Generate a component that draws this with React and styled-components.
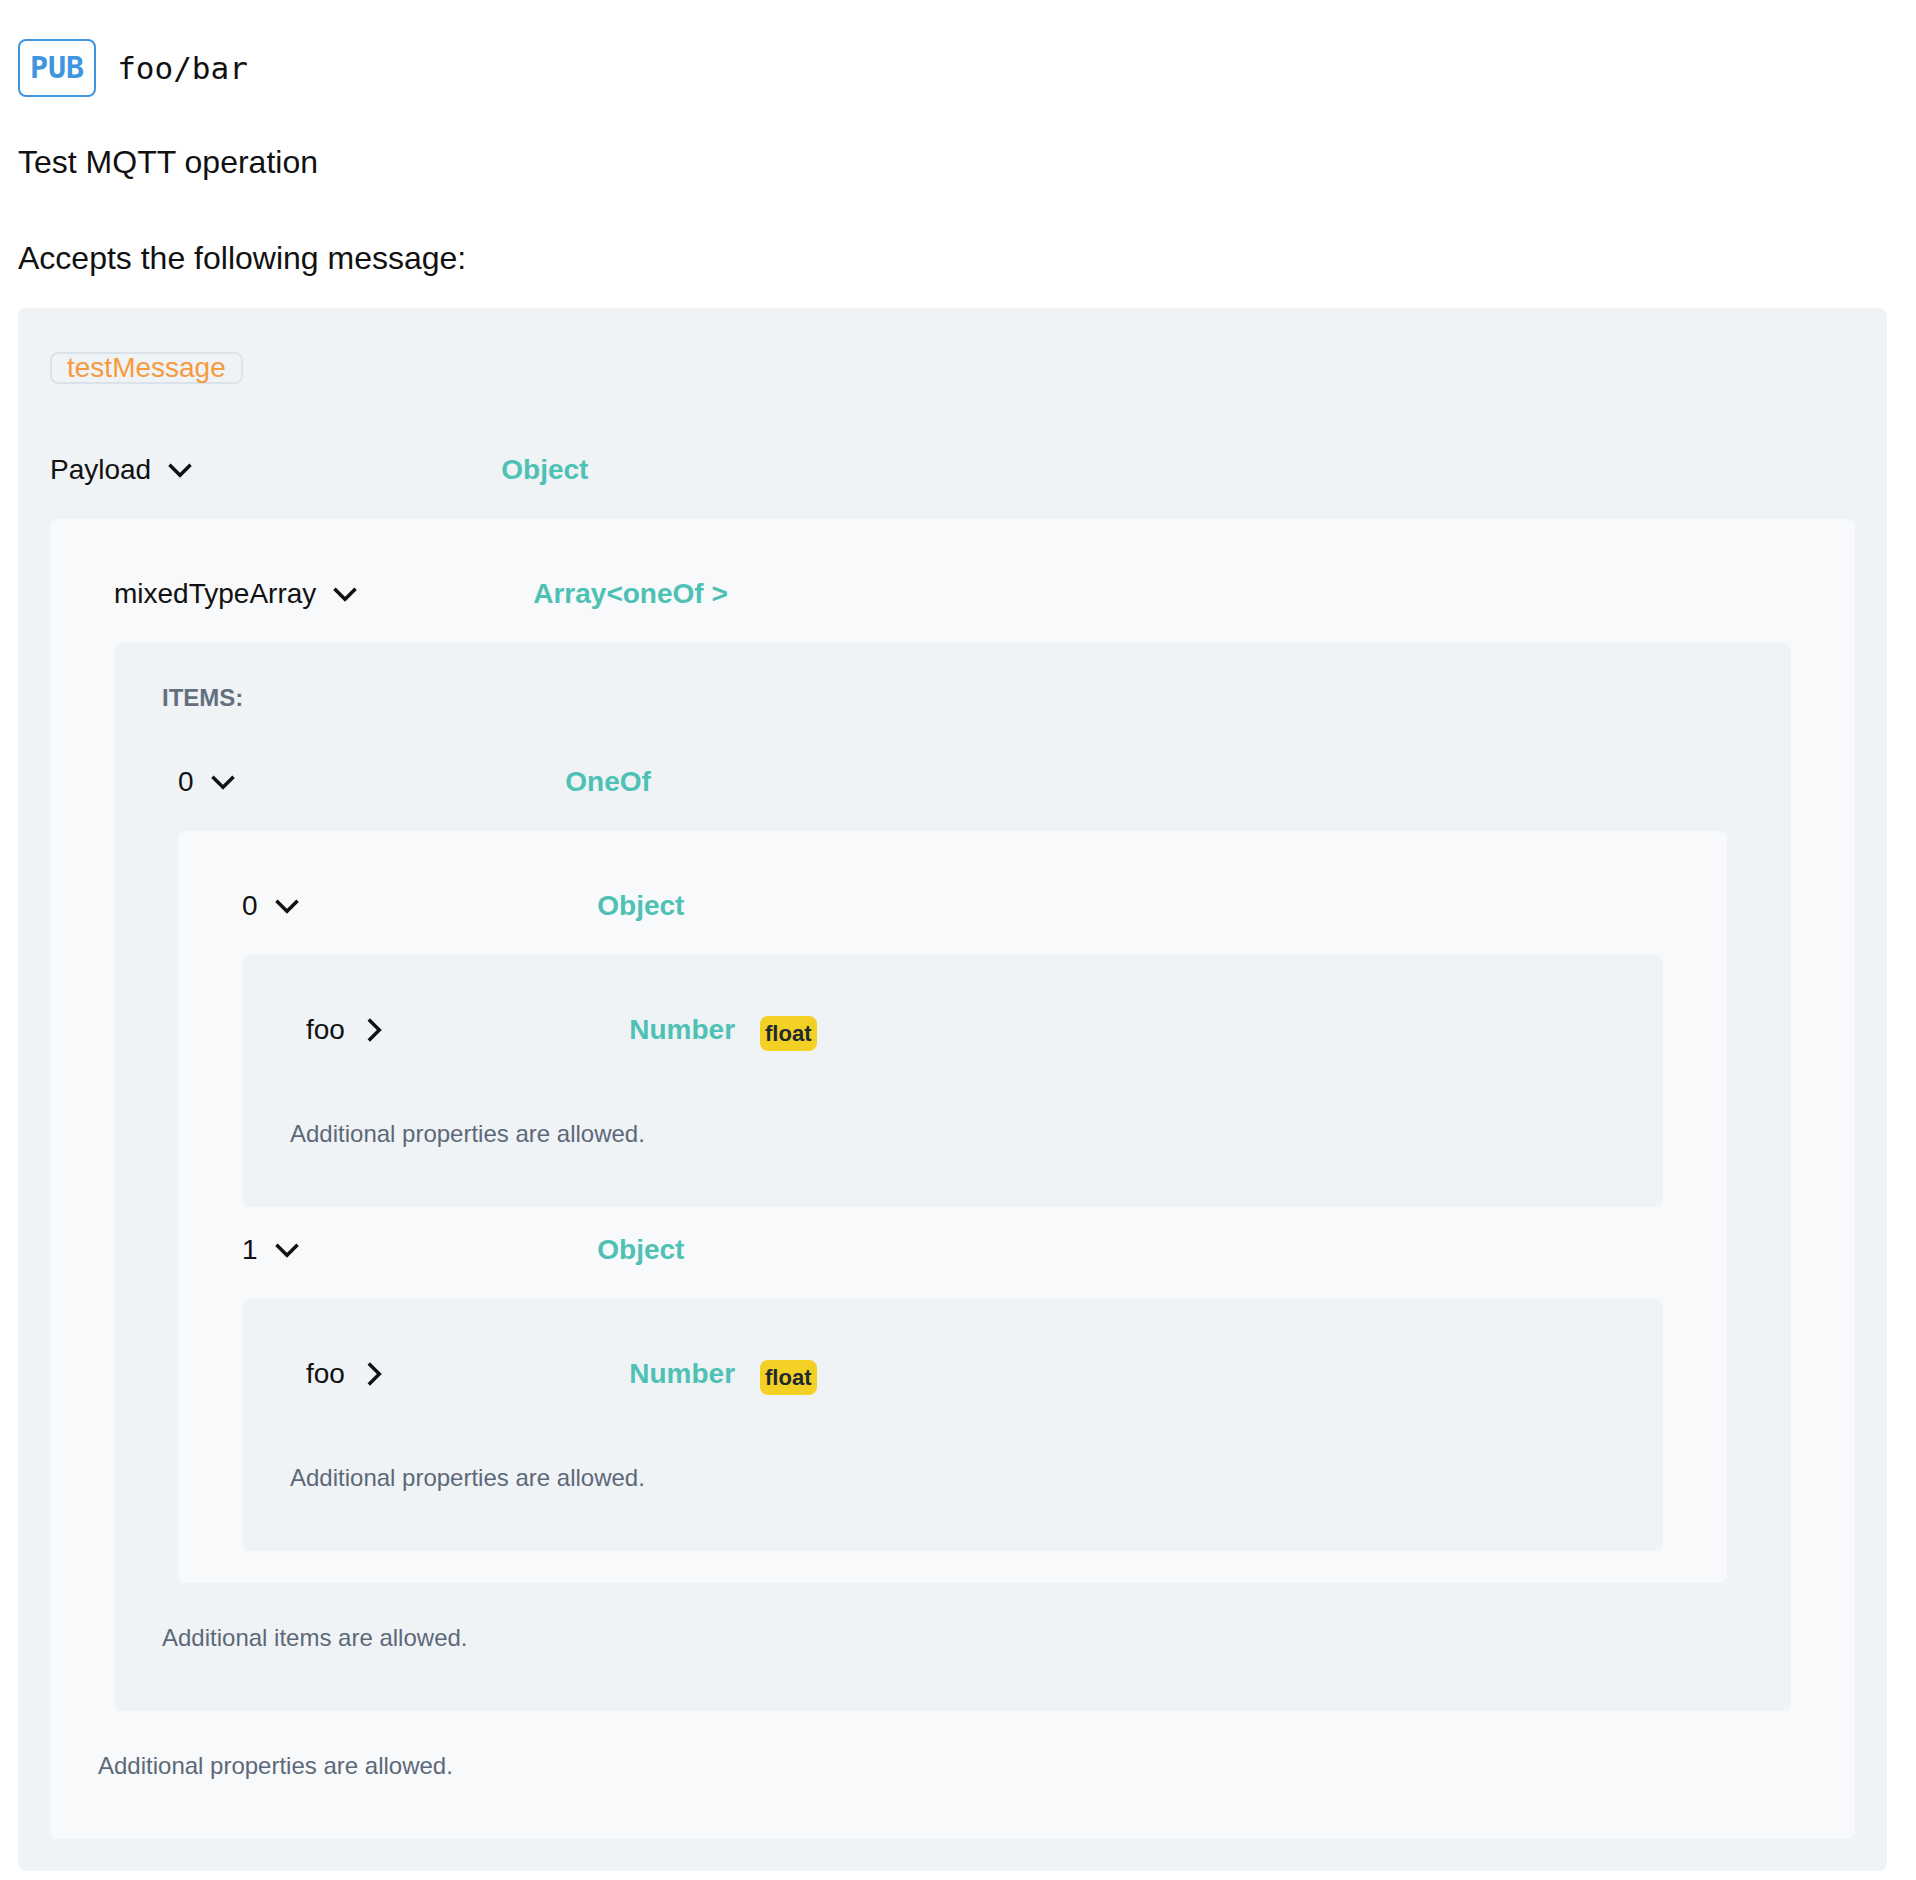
import React from "react";
import styled, { createGlobalStyle } from "styled-components";

const GlobalStyle = createGlobalStyle`
  html, body {
    margin: 0;
    padding: 0;
    background: #ffffff;
  }
  body {
    font-family: "Liberation Sans", Arial, sans-serif;
    color: #111111;
  }
`;

const Page = styled.div`
  padding: 39px 29px 8px 18px;
`;

const Header = styled.div`
  display: flex;
  align-items: center;
  height: 58px;
`;

const MethodBadge = styled.span`
  box-sizing: border-box;
  height: 58px;
  padding: 0 10px;
  border: 2px solid #3f95df;
  border-radius: 8px;
  color: #3f95df;
  font-family: "DejaVu Sans Mono", "Liberation Mono", monospace;
  font-weight: bold;
  font-size: 30px;
  line-height: 54px;
`;

const Channel = styled.span`
  margin-left: 21px;
  font-family: "DejaVu Sans Mono", "Liberation Mono", monospace;
  font-size: 31px;
`;

const Text = styled.p`
  margin: ${(p) => p.$gap}px 0 0;
  font-size: 32px;
  line-height: 48px;
`;

const MessageCard = styled.div`
  margin-top: 26px;
  padding: 32px;
  border-radius: 8px;
  background: #eff3f6;
`;

const TagRow = styled.div`
  display: flex;
  margin: 12px 0 43px;
`;

const MessageName = styled.span`
  padding: 0 15px;
  border: 2px solid #dce2e9;
  border-radius: 8px;
  color: #f6993f;
  font-size: 28px;
  line-height: 28px;
`;

const SchemaBox = styled.div`
  padding: 32px 48px;
  border-radius: 8px;
  background: ${(p) => (p.$tone === "dark" ? "#eff3f6" : "#f7f9fb")};
`;

const Nested = styled.div`
  padding: 0 16px;
`;

const Row = styled.div`
  display: flex;
  align-items: center;
  padding: 19px 0 25px;
  line-height: 48px;
`;

const NameCell = styled.div`
  display: flex;
  align-items: center;
  gap: 13px;
  width: 25%;
  flex-shrink: 0;
  font-size: 28px;
  color: #111111;
`;

const TypeCell = styled.div`
  display: flex;
  align-items: center;
  gap: 25px;
`;

const TypeName = styled.span`
  color: #4ec1b4;
  font-size: 28px;
  font-weight: bold;
`;

const FormatBadge = styled.span`
  margin-top: 6px;
  padding: 0 5px;
  border-radius: 8px;
  background: #f2d024;
  color: #1f2933;
  font-size: 22px;
  font-weight: bold;
  line-height: 35px;
`;

const ItemsLabel = styled.div`
  margin-bottom: 18px;
  color: #646f7e;
  font-size: 24px;
  font-weight: bold;
  line-height: 46px;
  text-transform: uppercase;
`;

const Note = styled.div`
  margin-top: 14px;
  padding: 20px 0;
  color: #5d6978;
  font-size: 24px;
  line-height: 42px;
`;

const ChevronIcon = styled.svg`
  width: 32px;
  height: 32px;
  flex-shrink: 0;
  color: #111111;
`;

const Chevron = ({ open }) => (
  <ChevronIcon
    viewBox="0 0 24 24"
    fill="none"
    stroke="currentColor"
    strokeWidth="2.6"
    strokeLinecap="square"
    strokeLinejoin="miter"
  >
    <path d={open ? "M19 9l-7 7-7-7" : "M9 5l7 7-7 7"} />
  </ChevronIcon>
);

const PropertyRow = ({ name, type, format, open }) => (
  <Row>
    <NameCell>
      <span>{name}</span>
      <Chevron open={open} />
    </NameCell>
    <TypeCell>
      <TypeName>{type}</TypeName>
      {format && <FormatBadge>{format}</FormatBadge>}
    </TypeCell>
  </Row>
);

const FloatObject = () => (
  <SchemaBox $tone="dark">
    <Nested>
      <PropertyRow name="foo" type="Number" format="float" />
    </Nested>
    <Note>Additional properties are allowed.</Note>
  </SchemaBox>
);

export default function App() {
  const variants = ["0", "1"];

  return (
    <Page>
      <GlobalStyle />
      <Header>
        <MethodBadge>PUB</MethodBadge>
        <Channel>foo/bar</Channel>
      </Header>
      <Text $gap={41}>Test MQTT operation</Text>
      <Text $gap={48}>Accepts the following message:</Text>

      <MessageCard>
        <TagRow>
          <MessageName>testMessage</MessageName>
        </TagRow>
        <PropertyRow name="Payload" type="Object" open />
        <SchemaBox $tone="light">
          <Nested>
            <PropertyRow name="mixedTypeArray" type="Array<oneOf >" open />
            <SchemaBox $tone="dark">
              <ItemsLabel>Items:</ItemsLabel>
              <Nested>
                <PropertyRow name="0" type="OneOf" open />
                <SchemaBox $tone="light">
                  <Nested>
                    {variants.map((v) => (
                      <React.Fragment key={v}>
                        <PropertyRow name={v} type="Object" open />
                        <FloatObject />
                      </React.Fragment>
                    ))}
                  </Nested>
                </SchemaBox>
              </Nested>
              <Note>Additional items are allowed.</Note>
            </SchemaBox>
          </Nested>
          <Note>Additional properties are allowed.</Note>
        </SchemaBox>
      </MessageCard>
    </Page>
  );
}
